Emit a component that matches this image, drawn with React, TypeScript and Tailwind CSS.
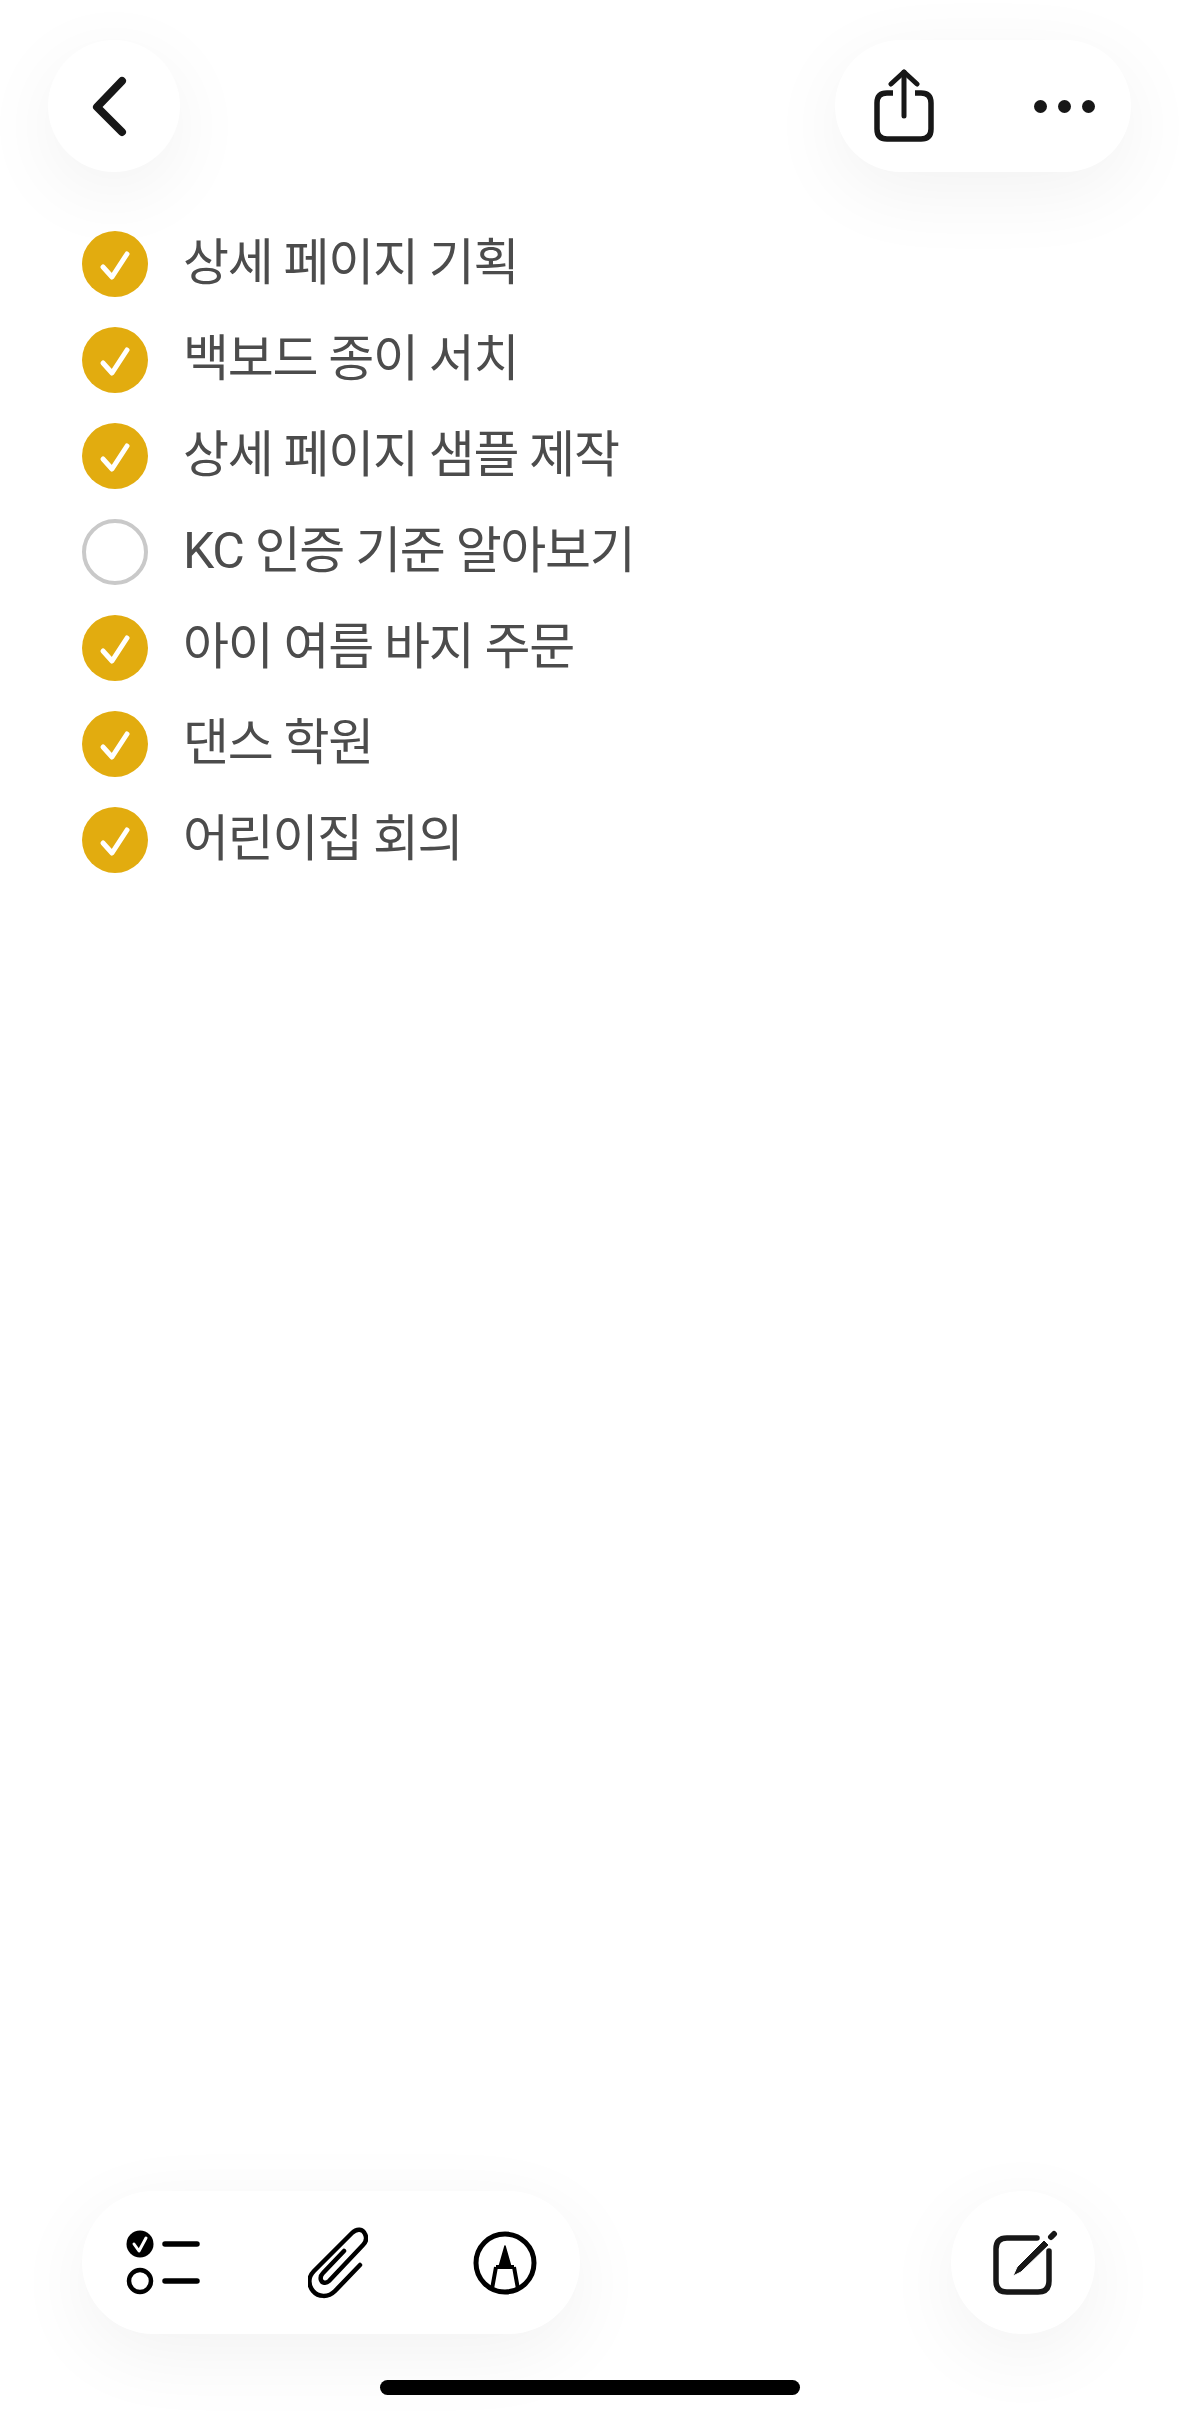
const ITEMS = [
  { label: '상세 페이지 기획', done: true },
  { label: '백보드 종이 서치', done: true },
  { label: '상세 페이지 샘플 제작', done: true },
  { label: 'KC 인증 기준 알아보기', done: false },
  { label: '아이 여름 바지 주문', done: true },
  { label: '댄스 학원', done: true },
  { label: '어린이집 회의', done: true },
]

const SHADOW = 'shadow-[0_20px_80px_rgba(0,0,0,0.055)]'

function CheckCircle({ done }: { done: boolean }) {
  if (!done) {
    return <div className="w-[66px] h-[66px] shrink-0 rounded-full border-[4px] border-[#c9c9c9]" />
  }
  return (
    <div className="w-[66px] h-[66px] shrink-0 rounded-full bg-[#e2ac0f] flex items-center justify-center">
      <svg width="66" height="66" viewBox="0 0 66 66" fill="none">
        <path d="M21 36 L30 46 L45 23" stroke="#fff" strokeWidth="5" strokeLinecap="round" strokeLinejoin="round" />
      </svg>
    </div>
  )
}

function BackIcon() {
  return (
    <svg width="40" height="64" viewBox="0 0 40 64" fill="none">
      <path d="M33 6 L8 32 L33 57" stroke="#171717" strokeWidth="8" strokeLinecap="round" strokeLinejoin="round" />
    </svg>
  )
}

function ShareIcon() {
  return (
    <svg width="60" height="74" viewBox="0 0 60 74" fill="none" stroke="#171717" strokeWidth="5.5" strokeLinecap="round" strokeLinejoin="round">
      <path d="M19 24 H13 Q3 24 3 34 V60 Q3 70 13 70 H47 Q57 70 57 60 V34 Q57 24 47 24 H41" strokeLinecap="butt" />
      <path d="M30 47 V3" strokeWidth="5" />
      <path d="M17 15 L30 3 L43 15" strokeWidth="5" />
    </svg>
  )
}

function ChecklistIcon() {
  return (
    <svg width="75" height="68" viewBox="0 0 75 68" fill="none">
      <circle cx="14" cy="15" r="13.5" fill="#000" />
      <path d="M8 15 L13 22 L20 9" stroke="#fff" strokeWidth="3" strokeLinecap="round" strokeLinejoin="round" />
      <circle cx="14" cy="52" r="11" stroke="#000" strokeWidth="4.5" />
      <path d="M39 15 H71 M39 52 H71" stroke="#000" strokeWidth="5.5" strokeLinecap="round" />
    </svg>
  )
}

function ClipIcon() {
  return (
    <svg width="60" height="72" viewBox="0 0 60 72" fill="none">
      <path
        d="M52 38 L27 64 C20 71 10 70 5 64 C0 58 0 50 6 44 L44 6 C49 1 55 2 57 7 C59 11 58 15 55 18 L21 54 C18 57 14 56 13 53 C12 50 13 48 15 46 L36 24"
        stroke="#000"
        strokeWidth="4.5"
        strokeLinecap="round"
        strokeLinejoin="round"
      />
    </svg>
  )
}

function MarkupIcon() {
  return (
    <svg width="64" height="68" viewBox="0 0 64 68" fill="none">
      <circle cx="32" cy="34" r="29" stroke="#000" strokeWidth="5" />
      <path d="M32 17 L26 38 H38 Z" fill="#000" stroke="#000" strokeWidth="1.5" strokeLinejoin="round" />
      <path d="M23 38 H41 M23 38 L19 60 M41 38 L45 60" stroke="#000" strokeWidth="4" />
    </svg>
  )
}

function ComposeIcon() {
  return (
    <svg width="66" height="66" viewBox="0 0 66 66" fill="none">
      <path d="M45 8 H15 Q4 8 4 19 V51 Q4 62 15 62 H46 Q57 62 57 51 V21" stroke="#171717" strokeWidth="5.5" strokeLinecap="round" />
      <path d="M25 37 L52 10 L57 15 L29 42 L21 46 Z" fill="#171717" stroke="#fff" strokeWidth="1" />
      <path d="M59 7 L62 4" stroke="#171717" strokeWidth="6" strokeLinecap="round" />
    </svg>
  )
}

export default function App() {
  return (
    <div
      className="w-[1179px] h-[2419px] bg-white overflow-hidden flex flex-col"
      style={{ fontFamily: 'Roboto, "Noto Sans CJK KR", sans-serif' }}
    >
      <div className="flex justify-between pt-[40px] pl-[48px] pr-[48px]">
        <button className={`w-[132px] h-[132px] rounded-full bg-white flex items-center justify-center pr-[10px] pt-[2px] ${SHADOW}`}>
          <BackIcon />
        </button>
        <div className={`w-[296px] h-[132px] rounded-full bg-white flex items-center pl-[39px] pr-[36px] justify-between ${SHADOW}`}>
          <ShareIcon />
          <div className="flex gap-[11px]">
            <span className="w-[13px] h-[13px] rounded-full bg-[#171717]" />
            <span className="w-[13px] h-[13px] rounded-full bg-[#171717]" />
            <span className="w-[13px] h-[13px] rounded-full bg-[#171717]" />
          </div>
        </div>
      </div>

      <ul className="mt-[59px] pl-[82px] flex flex-col gap-[30px]">
        {ITEMS.map(item => (
          <li key={item.label} className="flex items-center gap-[35px] h-[66px]">
            <CheckCircle done={item.done} />
            <span className="text-[50px] leading-[66px] font-normal tracking-[-1.3px] text-[#4c4c4c] -mt-[3px] whitespace-nowrap">
              {item.label}
            </span>
          </li>
        ))}
      </ul>

      <div className="mt-auto flex justify-between items-center pl-[82px] pr-[84px]">
        <div className={`w-[498px] h-[143px] rounded-full bg-white flex items-center pl-[44px] ${SHADOW}`}>
          <ChecklistIcon />
          <div className="ml-[107px]">
            <ClipIcon />
          </div>
          <div className="ml-[105px]">
            <MarkupIcon />
          </div>
        </div>
        <button className={`w-[144px] h-[143px] rounded-full bg-white flex items-center justify-center pl-[3px] ${SHADOW}`}>
          <ComposeIcon />
        </button>
      </div>

      <div className="flex justify-center mt-[46px] mb-[24px]">
        <div className="w-[420px] h-[15px] rounded-full bg-black" />
      </div>
    </div>
  )
}
